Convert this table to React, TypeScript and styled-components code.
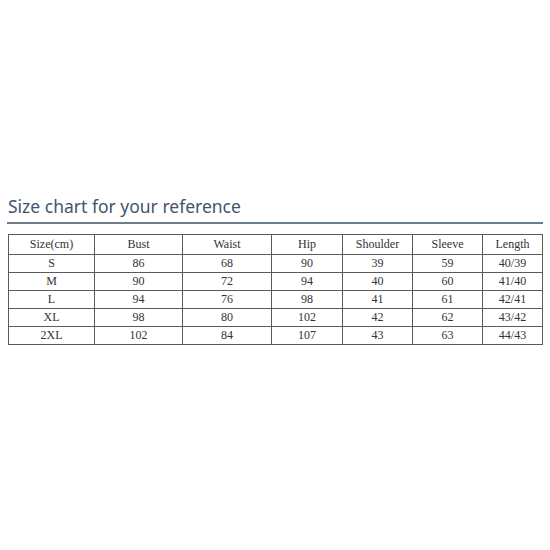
import React from "react";
import styled, { createGlobalStyle } from "styled-components";

const GlobalStyle = createGlobalStyle`
    html, body {
        margin: 0;
        padding: 0;
        background: #ffffff;
    }
`;

const columns = [
    { label: "Size(cm)", width: 86 },
    { label: "Bust", width: 88 },
    { label: "Waist", width: 89 },
    { label: "Hip", width: 71 },
    { label: "Shoulder", width: 70 },
    { label: "Sleeve", width: 70 },
    { label: "Length", width: 60 },
];

const rows = [
    ["S", "86", "68", "90", "39", "59", "40/39"],
    ["M", "90", "72", "94", "40", "60", "41/40"],
    ["L", "94", "76", "98", "41", "61", "42/41"],
    ["XL", "98", "80", "102", "42", "62", "43/42"],
    ["2XL", "102", "84", "107", "43", "63", "44/43"],
];

const App = () => {
    return (
        <Page>
            <GlobalStyle />
            <Title>Size chart for your reference</Title>
            <Rule />
            <Chart>
                <colgroup>
                    {columns.map((col) => (
                        <col key={col.label} style={{ width: col.width }} />
                    ))}
                </colgroup>
                <thead>
                    <tr>
                        {columns.map((col) => (
                            <HeadCell key={col.label}>{col.label}</HeadCell>
                        ))}
                    </tr>
                </thead>
                <tbody>
                    {rows.map((row) => (
                        <tr key={row[0]}>
                            {row.map((value, i) => (
                                <Cell key={i}>{value}</Cell>
                            ))}
                        </tr>
                    ))}
                </tbody>
            </Chart>
        </Page>
    );
};

const Page = styled.div`
    width: 550px;
    height: 550px;
    box-sizing: border-box;
    padding: 194px 0 0 0;
    display: flex;
    flex-direction: column;
`;

const Title = styled.h1`
    margin: 0 0 0 8px;
    font-family: "Noto Sans", sans-serif;
    font-weight: 400;
    font-size: 17.5px;
    line-height: 25px;
    color: #44556a;
`;

const Rule = styled.div`
    margin: 3px 7px 0 7px;
    height: 2px;
    background: #6e7d8e;
`;

const Chart = styled.table`
    margin: 10px 0 0 8px;
    width: 534px;
    border-collapse: collapse;
    table-layout: fixed;
    font-family: "Liberation Serif", serif;
    font-size: 12px;
    color: #333333;
`;

const HeadCell = styled.th`
    height: 19px;
    padding: 0;
    font-weight: 400;
    text-align: center;
    border: 1px solid #5a5a5a;
`;

const Cell = styled.td`
    height: 17px;
    padding: 0;
    text-align: center;
    border: 1px solid #5a5a5a;
`;

export default App;
